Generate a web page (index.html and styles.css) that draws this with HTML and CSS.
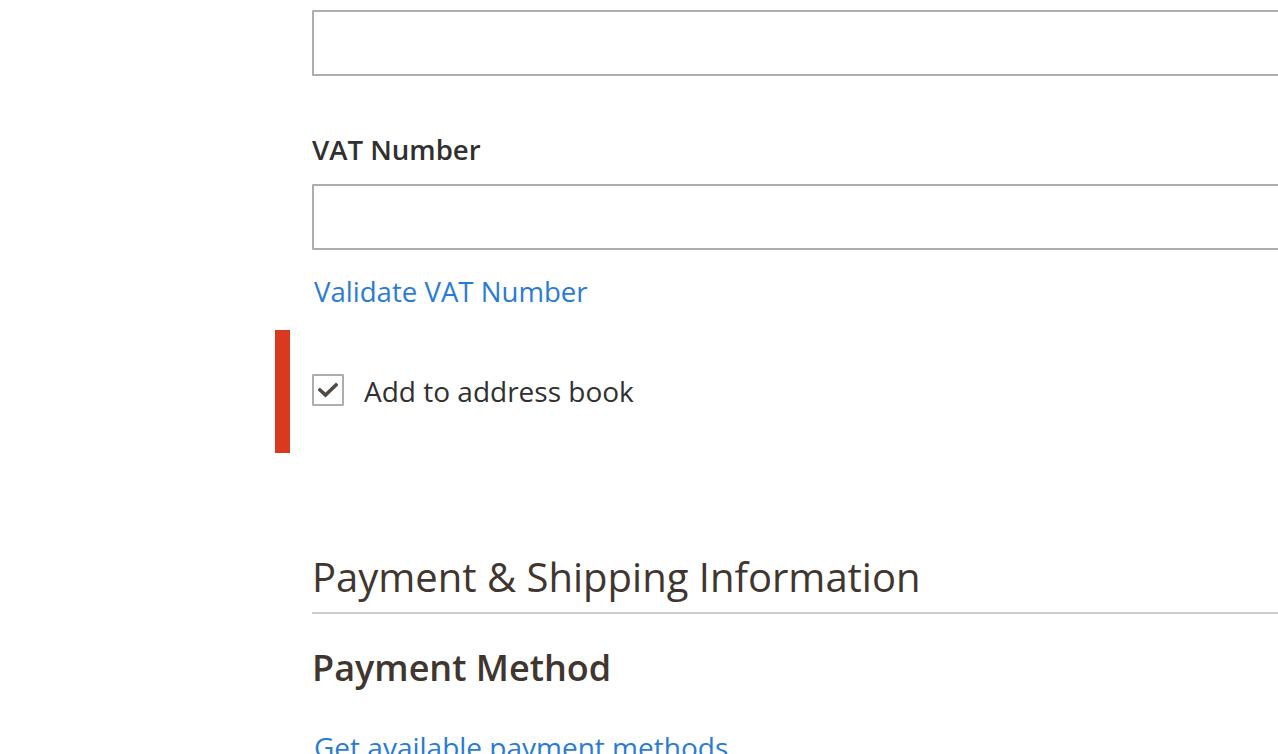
FILE: index.html
```html
<!DOCTYPE html>
<html lang="en">
<head>
	<meta charset="UTF-8">
	<title>Order - Billing Address</title>
	<link rel="stylesheet" href="styles.css">
</head>
<body>
	<div class="page">
		<div class="field first">
			<input type="text" class="input-text">
		</div>
		<div class="field">
			<label class="label">VAT Number</label>
			<input type="text" class="input-text">
			<a href="#" class="action-link validate">Validate VAT Number</a>
		</div>
		<div class="field choice changed">
			<span class="checkbox">
				<svg width="20" height="16" viewBox="0 0 20 16">
					<path d="M2 8 L7.5 13 L18 3" fill="none" stroke="#514943" stroke-width="3.6" stroke-linecap="square"/>
				</svg>
			</span>
			<span class="choice-label">Add to address book</span>
		</div>

		<div class="section">
			<h2 class="section-title">Payment &amp; Shipping Information</h2>
			<h3 class="sub-title">Payment Method</h3>
			<a href="#" class="action-link methods">Get available payment methods</a>
		</div>
	</div>
</body>
</html>
```

FILE: styles.css
```css
html, body{
	margin: 0;
	padding: 0;
	background: #fff;
	overflow: hidden;
}
body{
	font-family: "Open Sans", "Liberation Sans", sans-serif;
	color: #303030;
}
.page{
	padding: 10px 0 0 312px;
	width: 1100px;
}
.field{
	display: flex;
	flex-direction: column;
}
.label{
	font-size: 27.6px;
	font-weight: 600;
	line-height: 40px;
	margin: 53px 0 15px;
	color: #303030;
}
.input-text{
	box-sizing: border-box;
	height: 66px;
	width: 100%;
	border: 2px solid #adadad;
	border-radius: 1px;
	margin: 0;
	padding: 0 20px;
	background: #fff;
	font-size: 28px;
}
.action-link{
	color: #2a7bd4;
	text-decoration: none;
	font-size: 27.6px;
	line-height: 40px;
}
.validate{
	margin: 21px 0 0 2px;
}
.field.choice{
	flex-direction: row;
	align-items: center;
	margin: 19px 0 0 -37px;
	padding: 44px 0 47px 22px;
	border-left: 15px solid #d9391f;
}
.checkbox{
	box-sizing: border-box;
	width: 32px;
	height: 32px;
	border: 2px solid #adadad;
	border-radius: 1px;
	display: flex;
	align-items: center;
	justify-content: center;
	margin-right: 20px;
}
.choice-label{
	font-size: 28px;
	line-height: 32px;
	padding-top: 1px;
	margin-bottom: -1px;
	color: #303030;
}
.section{
	margin-top: 98px;
}
.section-title{
	margin: 0;
	font-size: 40px;
	font-weight: 400;
	line-height: 52px;
	color: #41362f;
	padding-bottom: 9px;
	border-bottom: 2px solid #cccccc;
}
.sub-title{
	margin: 27px 0 0;
	font-size: 36px;
	font-weight: 600;
	line-height: 54px;
	color: #41362f;
}
.section .methods{
	display: block;
	margin: 32px 0 0 2px;
	font-size: 28px;
}
```
